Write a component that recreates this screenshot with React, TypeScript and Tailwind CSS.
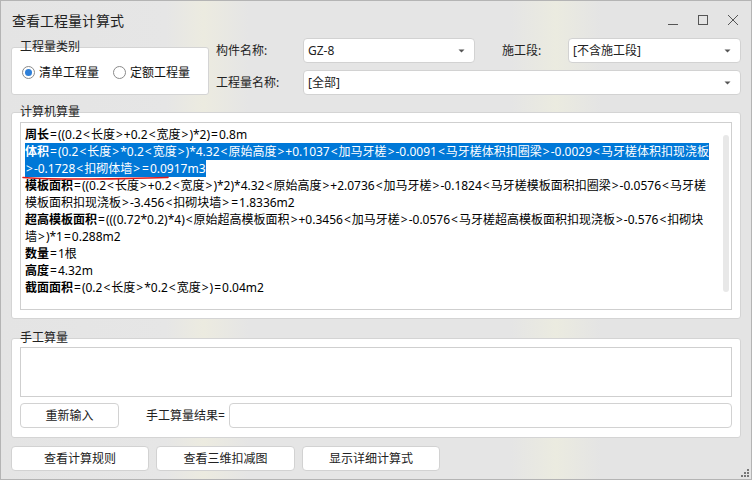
import type { ReactNode } from 'react';

const FONT = { fontFamily: '"Noto Sans", "Noto Sans CJK SC", sans-serif' };

function Caret() {
  return (
    <svg width="7" height="4" viewBox="0 0 7 4" className="shrink-0">
      <path d="M0.5 0.5 L6.5 0.5 L3.5 3.5 Z" fill="#555" />
    </svg>
  );
}

function Combo({ value, className }: { value: string; className: string }) {
  return (
    <div className={`h-[25px] bg-white border border-[#d2d2d2] rounded-[4px] flex items-center justify-between pl-[4px] pr-[9px] text-[12px] text-[#222] ${className}`}>
      <span>{value}</span>
      <Caret />
    </div>
  );
}

function Radio({ checked, label }: { checked?: boolean; label: string }) {
  return (
    <label className="flex items-center gap-[4px] text-[12px] text-[#111]">
      <span className="w-[13px] h-[13px] rounded-full border border-[#8a8a8a] bg-white flex items-center justify-center">
        {checked && <span className="w-[7px] h-[7px] rounded-full bg-[#2e7fd8]" />}
      </span>
      {label}
    </label>
  );
}

function Group({ title, className, children }: { title: string; className: string; children: ReactNode }) {
  return (
    <div className={`relative bg-white border border-[#d4d4d4] rounded-[3px] ${className}`}>
      <span className="absolute left-[8px] -top-[10px] text-[12px] leading-[17px] text-[#222]">{title}</span>
      {children}
    </div>
  );
}

function Btn({ label, className }: { label: string; className: string }) {
  return (
    <button className={`bg-white border border-[#d2d2d2] rounded-[4px] text-[12px] text-[#222] ${className}`}>
      {label}
    </button>
  );
}

// the original font draws < > = wider than ours, so pad them a little
function Formula({ text }: { text: string }) {
  return (
    <>
      {text.split(/([<>=])/).map((part, i) =>
        part === '<' || part === '>' || part === '=' ? (
          <span key={i} className="px-[1px]">{part}</span>
        ) : (
          part
        )
      )}
    </>
  );
}

const lines: { b?: string; t: string; hl?: boolean }[] = [
  { b: '周长', t: '=((0.2<长度>+0.2<宽度>)*2)=0.8m' },
  { b: '体积', t: '=(0.2<长度>*0.2<宽度>)*4.32<原始高度>+0.1037<加马牙槎>-0.0091<马牙槎体积扣圈梁>-0.0029<马牙槎体积扣现浇板', hl: true },
  { t: '>-0.1728<扣砌体墙>=0.0917m3', hl: true },
  { b: '模板面积', t: '=((0.2<长度>+0.2<宽度>)*2)*4.32<原始高度>+2.0736<加马牙槎>-0.1824<马牙槎模板面积扣圈梁>-0.0576<马牙槎' },
  { t: '模板面积扣现浇板>-3.456<扣砌块墙>=1.8336m2' },
  { b: '超高模板面积', t: '=(((0.72*0.2)*4)<原始超高模板面积>+0.3456<加马牙槎>-0.0576<马牙槎超高模板面积扣现浇板>-0.576<扣砌块' },
  { t: '墙>)*1=0.288m2' },
  { b: '数量', t: '=1根' },
  { b: '高度', t: '=4.32m' },
  { b: '截面面积', t: '=(0.2<长度>*0.2<宽度>)=0.04m2' },
];

export default function App() {
  return (
    <div
      style={FONT}
      className="relative w-[752px] h-[480px] overflow-hidden border border-[#b4b4b4] bg-[linear-gradient(90deg,#e4e4e4_0%,#e6e6e6_22%,#ecebe0_27%,#e5e5e5_33%,#e5e5e5_68%,#ebebe0_74%,#e4e4e4_80%,#e4e4e4_100%)] flex flex-col"
    >
      {/* title bar */}
      <div className="h-[37px] flex items-center justify-between pl-[11px] pr-[12px] shrink-0">
        <span className="text-[14px] text-[#222] pt-[2px]">查看工程量计算式</span>
        <div className="flex items-center gap-[18px] text-[#555]">
          <svg width="12" height="12" viewBox="0 0 12 12"><path d="M1 10.5 H11" stroke="#555" strokeWidth="1" /></svg>
          <svg width="12" height="12" viewBox="0 0 12 12"><rect x="1.5" y="1.5" width="9" height="9" fill="none" stroke="#555" strokeWidth="1" /></svg>
          <svg width="12" height="12" viewBox="0 0 12 12"><path d="M1 1 L11 11 M11 1 L1 11" stroke="#555" strokeWidth="1" /></svg>
        </div>
      </div>

      <div className="px-[10px] flex flex-col">
        {/* top filters */}
        <div className="flex">
          <Group title="工程量类别" className="w-[198px] h-[48px] mt-[9px] flex items-center gap-[14px] pl-[10px] pt-[3px]">
            <Radio checked label="清单工程量" />
            <Radio label="定额工程量" />
          </Group>
          <div className="ml-[7px] flex flex-col gap-[7px] text-[12px] text-[#222]">
            <div className="flex items-center">
              <span className="w-[87px]">构件名称:</span>
              <Combo value="GZ-8" className="w-[172px]" />
              <span className="w-[66px] ml-[27px]">施工段:</span>
              <Combo value="[不含施工段]" className="w-[173px]" />
            </div>
            <div className="flex items-center">
              <span className="w-[87px]">工程量名称:</span>
              <Combo value="[全部]" className="w-[438px]" />
            </div>
          </div>
        </div>

        {/* computed */}
        <Group title="计算机算量" className="mt-[17px] h-[207px] px-[8px] pt-[9px] pb-[8px]">
          <div className="relative h-full border border-[#cfcfcf] bg-white pl-[4px] pt-[3px] text-[12px] leading-[17px] text-black">
            {lines.map((l, i) => (
              <div key={i} className="whitespace-nowrap">
                <span className={l.hl ? 'bg-[#0078d7] text-white' : ''}>
                  {l.b && <b className="font-bold">{l.b}</b>}
                  <Formula text={l.t} />
                </span>
              </div>
            ))}
            <svg className="absolute left-[1px] top-[52px]" width="150" height="6" viewBox="0 0 150 6">
              <path d="M1 2.5 C 30 4.5, 70 4.2, 100 3.6 S 135 2.8, 146 2.4" stroke="#e01a1a" strokeWidth="1.6" fill="none" strokeLinecap="round" />
            </svg>
            <div className="absolute right-[2px] top-[12px] w-[6px] h-[157px] rounded-full bg-[#e8e8e8]" />
          </div>
        </Group>

        {/* manual */}
        <Group title="手工算量" className="mt-[19px] h-[100px] px-[8px] pt-[8px]">
          <div className="h-[50px] border border-[#cfcfcf] bg-white" />
          <div className="mt-[6px] flex items-center">
            <Btn label="重新输入" className="w-[99px] h-[25px]" />
            <span className="ml-[27px] text-[12px] text-[#222]">手工算量结果=</span>
            <div className="ml-[4px] flex-1 h-[25px] border border-[#d2d2d2] rounded-[4px] bg-white" />
          </div>
        </Group>

        {/* bottom buttons */}
        <div className="mt-[8px] flex gap-[7px]">
          <Btn label="查看计算规则" className="w-[138px] h-[25px]" />
          <Btn label="查看三维扣减图" className="w-[139px] h-[25px]" />
          <Btn label="显示详细计算式" className="w-[138px] h-[25px]" />
        </div>
      </div>

      {/* resize grip */}
      <svg className="absolute right-[2px] bottom-[2px]" width="8" height="8" viewBox="0 0 8 8">
        <rect x="6" y="0" width="2" height="2" fill="#777" />
        <rect x="3" y="3" width="2" height="2" fill="#777" />
        <rect x="6" y="3" width="2" height="2" fill="#777" />
        <rect x="0" y="6" width="2" height="2" fill="#777" />
        <rect x="3" y="6" width="2" height="2" fill="#777" />
        <rect x="6" y="6" width="2" height="2" fill="#777" />
      </svg>
    </div>
  );
}
